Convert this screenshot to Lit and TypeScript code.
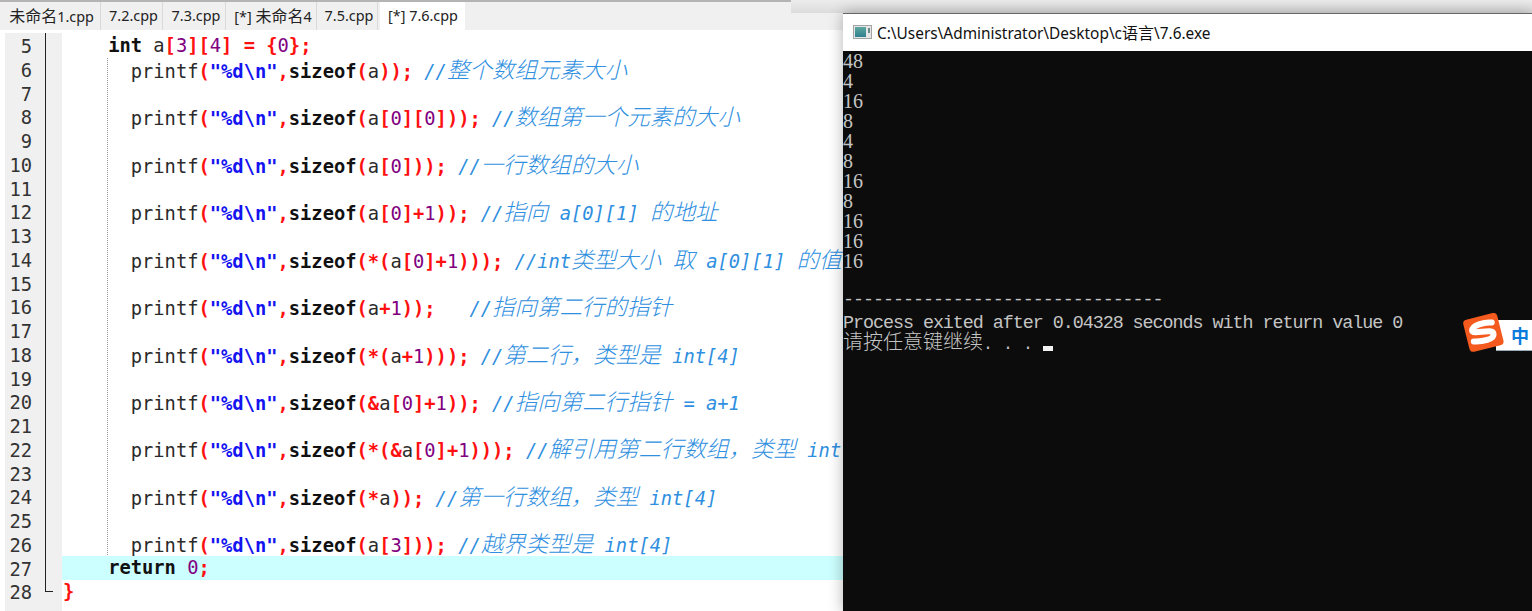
import { LitElement, html, css } from "lit";
import { customElement } from "lit/decorators.js";

type Tok = [string, string];
const P = "printf";
function call(arg: Tok[], comment: string, gap = " "): Tok[] {
  return [
    ["pl", "      " + P],
    ["sym", "("],
    ["str", '"%d\\n"'],
    ["sym", ","],
    ["kw", "sizeof"],
    ["sym", "("],
    ...arg,
    ["sym", "));"],
    ["pl", gap],
    ["cm", comment],
  ];
}
const a: Tok = ["pl", "a"];
const idx0: Tok[] = [a, ["sym", "["], ["num", "0"], ["sym", "]"]];
const rows: Tok[][] = [
  [["kw", "    int"], ["pl", " a"], ["sym", "["], ["num", "3"], ["sym", "]["], ["num", "4"], ["sym", "]"], ["pl", " "], ["sym", "="], ["pl", " "], ["sym", "{"], ["num", "0"], ["sym", "};"]],
  call([a], "//整个数组元素大小"),
  [],
  call([...idx0, ["sym", "["], ["num", "0"], ["sym", "]"]], "//数组第一个元素的大小"),
  [],
  call(idx0, "//一行数组的大小"),
  [],
  call([...idx0, ["sym", "+"], ["num", "1"]], "//指向 a[0][1] 的地址"),
  [],
  call([["sym", "*("], ...idx0, ["sym", "+"], ["num", "1"], ["sym", ")"]], "//int类型大小 取 a[0][1] 的值"),
  [],
  call([a, ["sym", "+"], ["num", "1"]], "//指向第二行的指针", "   "),
  [],
  call([["sym", "*("], a, ["sym", "+"], ["num", "1"], ["sym", ")"]], "//第二行，类型是 int[4]"),
  [],
  call([["sym", "&"], ...idx0, ["sym", "+"], ["num", "1"]], "//指向第二行指针 = a+1"),
  [],
  call([["sym", "*(&"], ...idx0, ["sym", "+"], ["num", "1"], ["sym", ")"]], "//解引用第二行数组，类型 int[4]"),
  [],
  call([["sym", "*"], a], "//第一行数组，类型 int[4]"),
  [],
  call([a, ["sym", "["], ["num", "3"], ["sym", "]"]], "//越界类型是 int[4]"),
  [["kw", "    return"], ["pl", " "], ["num", "0"], ["sym", ";"]],
  [["sym", "}"]],
];
const tabs = ["未命名1.cpp", "7.2.cpp", "7.3.cpp", "[*] 未命名4", "7.5.cpp", "[*] 7.6.cpp"];
const tabWidths = [98, 61, 62, 90, 60, 85];
const digits = ["48", "4", "16", "8", "4", "8", "16", "8", "16", "16", "16"];

const splitCjk = (t: string, cls: string) =>
  t.split(/([\u4e00-\u9fff，]+)/).map((s, i) => (i % 2 ? html`<span class="${cls}">${s}</span>` : s));

@customElement("app-root")
export class AppRoot extends LitElement {
  static styles = css`
    :host { display: block; width: 1532px; height: 611px; position: relative; overflow: hidden; background: #fff; }
    .tabbar { display: flex; height: 30px; box-sizing: border-box; padding: 2px 0 0 3px; gap: 1px; background: #f0f0f0; position: relative; }
    .tabbar::before { content: ""; position: absolute; left: 0; top: 0; width: 791px; height: 2px; background: #b4b4b4; }
    .tab { box-sizing: border-box; height: 28px; padding-left: 3px; display: flex; align-items: center; justify-content: center; white-space: pre; background: #f0f0f0; border-right: 1px solid #d9d9d9; font: 14.4px/1 "Noto Sans", "Noto Sans CJK SC", sans-serif; color: #222; }
    .tab.first { padding-left: 0; }
    .tab-cjk { font-size: 16px; }
    .tab.on { background: #fff; border: 0; margin-left: 1px; padding-left: 1px; }
    .body { display: flex; height: 581px; padding-left: 5px; position: relative; }
    .gutter { width: 57px; flex: none; background: #f0f0f0; margin-top: 3px; padding-top: 2px; box-sizing: border-box; position: relative; }
    .num { width: 27px; text-align: right; font: 18.75px/23.75px "DejaVu Sans Mono", monospace; height: 23.75px; color: #333; }
    .fold { position: absolute; left: 40px; top: 0; width: 7px; height: 558px; border-left: 1px solid #222; border-bottom: 1px solid #222; }
    .code { flex: 1; padding-top: 4px; position: relative; }
    .guide { position: absolute; left: 45px; top: 28px; height: 497px; border-left: 1px dotted #999; }
    .row { height: 23.74px; font: 18.75px/23.74px "DejaVu Sans Mono", monospace; white-space: pre; padding-left: 1px; color: #2a2a2a; }
    .row.cur { background: #ccffff; }
    .kw { font-weight: 700; color: #111; }
    .sym { font-weight: 700; color: #ff1010; }
    .str { font-weight: 700; color: #1414f0; }
    .num-lit { color: #800080; }
    .cm { font-style: italic; color: #2f8fe0; }
    .cjk { font-size: 22.5px; line-height: 20px; font-family: "Noto Sans CJK SC", sans-serif; font-weight: 300; }
    .shade { position: absolute; left: 791px; top: 0; right: 0; height: 13px; background: linear-gradient(#ececec, #dcdcdc); }
    .win { position: absolute; left: 843px; top: 13px; width: 689px; height: 598px; border-top: 1px solid #666; box-shadow: 0 0 14px rgba(0,0,0,.3); display: flex; flex-direction: column; }
    .title { height: 35px; padding-bottom: 2px; flex: none; background: #fff; display: flex; align-items: center; gap: 5px; padding-left: 10px; font: 15.4px "Noto Sans", "Noto Sans CJK SC", sans-serif; color: #111; }
    .title-cjk { font-size: 16px; }
    .term { flex: 1; background: #0c0c0c; color: #c4c4c4; padding-top: 0; }
    .line { height: 20px; white-space: pre; font: 18.4px/20px "Liberation Mono", "Noto Sans CJK SC", monospace; letter-spacing: -1.05px; }
    .line.digit { font: 20px/20px "Liberation Serif", serif; letter-spacing: 0; }
    .line.low { padding-top: 5px; height: 15px; line-height: 15px; }
    .zh { font: 300 20px/19px "Noto Sans CJK SC", sans-serif; letter-spacing: 0; }
    .dots { letter-spacing: 0; font: 16.67px/19px "Liberation Mono", monospace; }
    .cursor { display: inline-block; width: 10px; height: 5px; background: #f2f2f2; vertical-align: -2px; }
    .ime { position: absolute; left: 1463px; top: 313px; width: 69px; height: 42px; }
    .ime-panel { position: absolute; left: 33px; top: 7px; right: 0; height: 30px; background: #fff; border-bottom: 1px solid #9ab; display: flex; align-items: center; justify-content: flex-end; padding-right: 3px; font: 700 18px/1 "Noto Sans CJK SC", sans-serif; color: #0b7bdc; }
    .ime svg { position: absolute; left: 0; top: 0; }
  `;

  render() {
    return html`
      <div class="tabbar">
        ${tabs.map((t, i) => html`<div class="tab ${i === 5 ? "on" : ""} ${i === 0 ? "first" : ""}" style="width:${tabWidths[i]}px"><span>${splitCjk(t, "tab-cjk")}</span></div>`)}
      </div>
      <div class="body">
        <div class="gutter">
          <div class="fold"></div>
          ${rows.map((_, i) => html`<div class="num">${i + 5}</div>`)}
        </div>
        <div class="code">
          <div class="guide"></div>
          ${rows.map(
            (r, i) => html`<div class="row ${i === 22 ? "cur" : ""}">${r.map(([c, t]) =>
              c === "cm"
                ? html`<span class="cm">${splitCjk(t, "cjk")}</span>`
                : html`<span class="${c === "num" ? "num-lit" : c}">${t}</span>`
            )}</div>`
          )}
        </div>
      </div>
      <div class="shade"></div>
      <div class="win">
        <div class="title">
          <svg width="19" height="14" viewBox="0 0 19 14">
            <defs><linearGradient id="ic" x1="0" y1="0" x2="0" y2="1"><stop offset="0" stop-color="#5fa8a0"/><stop offset="1" stop-color="#2f7f8f"/></linearGradient></defs>
            <rect x=".5" y=".5" width="18" height="13" fill="#e6e6e6" stroke="#a4a4a4"/>
            <rect x="2" y="2" width="11" height="10" fill="url(#ic)"/>
            <rect x="15" y="3" width="2" height="5" fill="#6a8a8a"/>
          </svg>
          <span>${splitCjk("C:\\Users\\Administrator\\Desktop\\c语言\\7.6.exe", "title-cjk")}</span>
        </div>
        <div class="term">
          ${digits.map((l) => html`<div class="line digit">${l}</div>`)}
          <div class="line"></div>
          <div class="line">--------------------------------</div>
          <div class="line low">Process exited after 0.04328 seconds with return value 0</div>
          <div class="line"><span class="zh">请按任意键继续</span><span class="dots">. . . </span><span class="cursor"></span></div>
        </div>
      </div>
      <div class="ime">
        <div class="ime-panel">中</div>
        <svg width="42" height="42" viewBox="0 0 42 42">
          <g transform="rotate(-14 20 20)">
            <rect x="3" y="3" width="35" height="33" rx="4" fill="#f4591d"/>
            <path d="M31 12 C24 9.5 11 10 10 15 C9.5 20 31 17 30 23.5 C29.5 29 17 28.5 9 26" fill="none" stroke="#fff" stroke-width="6" stroke-linecap="round"/>
          </g>
        </svg>
      </div>
    `;
  }
}
